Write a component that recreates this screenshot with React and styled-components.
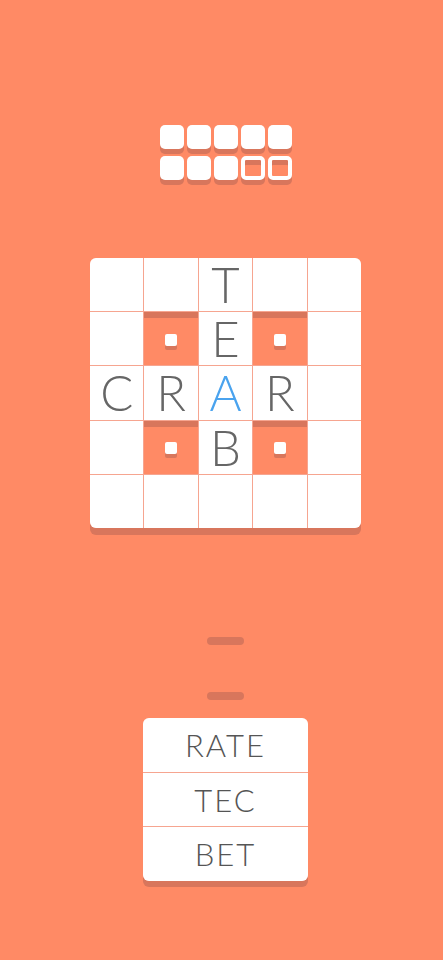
import React from "react";
import styled, { createGlobalStyle } from "styled-components";

const BG = "#ff8a65";
const SHADE = "#d8765c";
const LINE = "#f6a590";

const Global = createGlobalStyle`
  html, body { margin: 0; padding: 0; background: ${BG}; }
  body { font-family: "Lato", "Open Sans", sans-serif; }
`;

const Page = styled.div`
  width: 443px;
  height: 960px;
  background: ${BG};
  display: flex;
  flex-direction: column;
  align-items: center;
  padding: 125px 0 0 8px;
  box-sizing: border-box;
`;

const Tiles = styled.div`
  display: grid;
  grid-template-columns: repeat(5, 24px);
  grid-auto-rows: 24px;
  column-gap: 3px;
  row-gap: 7px;
`;

const Tile = styled.div`
  box-sizing: border-box;
  border-radius: 5px;
  background: ${(p) => (p.$hollow ? BG : "#fff")};
  border: ${(p) => (p.$hollow ? "4px solid #fff" : "none")};
  box-shadow: 0 5px 0 ${SHADE}${(p) => (p.$hollow ? `, inset 0 5px 0 ${SHADE}` : "")};
`;

const Board = styled.div`
  margin-top: 78px;
  width: 271px;
  height: 270px;
  display: grid;
  grid-template-columns: repeat(5, 1fr);
  grid-template-rows: repeat(5, 1fr);
  gap: 1px;
  background: ${LINE};
  border-radius: 6px;
  overflow: hidden;
  box-shadow: 0 7px 0 ${SHADE};
`;

const Cell = styled.div`
  background: ${(p) => (p.$blocked ? BG : "#fff")};
  box-shadow: ${(p) => (p.$blocked ? `inset 0 6px 0 ${SHADE}` : "none")};
  display: flex;
  align-items: center;
  justify-content: center;
  font-family: "Lato", sans-serif;
  font-weight: 300;
  font-size: 49px;
  line-height: 1;
  color: ${(p) => (p.$accent ? "#4aa3ee" : "#666")};
`;

const Peg = styled.div`
  width: 12px;
  height: 12px;
  border-radius: 2px;
  background: #fff;
  box-shadow: 0 4px 0 ${SHADE};
  margin-top: 2px;
`;

const Dash = styled.div`
  width: 37px;
  height: 8px;
  border-radius: 4px;
  background: ${SHADE};
  margin-top: ${(p) => p.$top}px;
`;

const WordCard = styled.div`
  margin-top: 18px;
  width: 165px;
  display: flex;
  flex-direction: column;
  gap: 1px;
  background: ${LINE};
  border-radius: 6px;
  overflow: hidden;
  box-shadow: 0 6px 0 ${SHADE};
`;

const Word = styled.div`
  height: 53.7px;
  background: #fff;
  display: flex;
  align-items: center;
  justify-content: center;
  font-family: "Lato", sans-serif;
  font-weight: 300;
  font-size: 31px;
  letter-spacing: 2px;
  color: #555;
`;

const layout = [
  ["", "", "T", "", ""],
  ["", "#", "E", "#", ""],
  ["C", "R", "A", "R", ""],
  ["", "#", "B", "#", ""],
  ["", "", "", "", ""],
];

export default function App() {
  return (
    <Page>
      <Global />
      <Tiles>
        {Array.from({ length: 10 }).map((_, i) => (
          <Tile key={i} $hollow={i >= 8} />
        ))}
      </Tiles>
      <Board>
        {layout.flat().map((c, i) =>
          c === "#" ? (
            <Cell key={i} $blocked>
              <Peg />
            </Cell>
          ) : (
            <Cell key={i} $accent={c === "A" && i === 12}>
              {c}
            </Cell>
          )
        )}
      </Board>
      <Dash $top={109} />
      <Dash $top={47} />
      <WordCard>
        <Word>RATE</Word>
        <Word>TEC</Word>
        <Word>BET</Word>
      </WordCard>
    </Page>
  );
}
